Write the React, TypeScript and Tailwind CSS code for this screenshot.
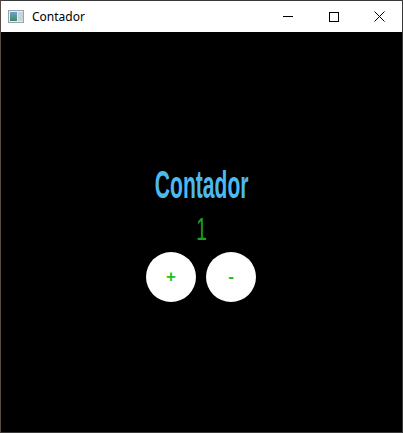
export default function App() {
  return (
    <div className="flex h-[433px] w-[403px] flex-col border border-[#3a3a3a] border-l-[#5a4a44] bg-black">
      <div className="flex h-[31px] shrink-0 items-center bg-white">
        <div className="ml-[7px] flex h-[13px] w-[16px] items-stretch border border-[#9aa4ac] bg-[#e9eef2]">
          <div className="m-[1px] w-[7px] bg-gradient-to-b from-[#6fa0c8] to-[#3f8a6a]" />
          <div className="my-[1px] w-[5px] bg-[#c9d4dc]" />
        </div>
        <span className="ml-[8px] text-[12px] text-black" style={{ fontFamily: '"Noto Sans", "Open Sans", sans-serif' }}>
          Contador
        </span>
        <div className="ml-auto flex h-full">
          <div className="flex w-[46px] items-center justify-center">
            <div className="h-px w-[10px] bg-black" />
          </div>
          <div className="flex w-[46px] items-center justify-center">
            <div className="h-[10px] w-[10px] border border-black" />
          </div>
          <div className="flex w-[45px] items-center justify-center">
            <svg width="11" height="11" viewBox="0 0 11 11">
              <path d="M0.5 0.5 L10.5 10.5 M10.5 0.5 L0.5 10.5" stroke="#000" strokeWidth="1" />
            </svg>
          </div>
        </div>
      </div>
      <div className="flex flex-1 flex-col items-center pt-[133px]" style={{ fontFamily: '"Liberation Sans", Arial, sans-serif' }}>
        <div className="h-[40px] origin-center scale-x-[0.54] text-[39px] font-bold leading-[40px] text-[#4cb9ef]">Contador</div>
        <div className="mt-[10px] h-[30px] scale-x-[0.62] text-[31px] leading-[30px] text-[#17a520]">1</div>
        <div className="mt-[7px] flex gap-[10px] pr-px">
          <button className="flex h-[50px] w-[50px] items-center justify-center rounded-full bg-white text-[17px] font-bold text-[#1fbf2a]">
            +
          </button>
          <button className="flex h-[50px] w-[50px] items-center justify-center rounded-full bg-white text-[17px] font-bold text-[#1fbf2a]">
            -
          </button>
        </div>
      </div>
    </div>
  );
}
